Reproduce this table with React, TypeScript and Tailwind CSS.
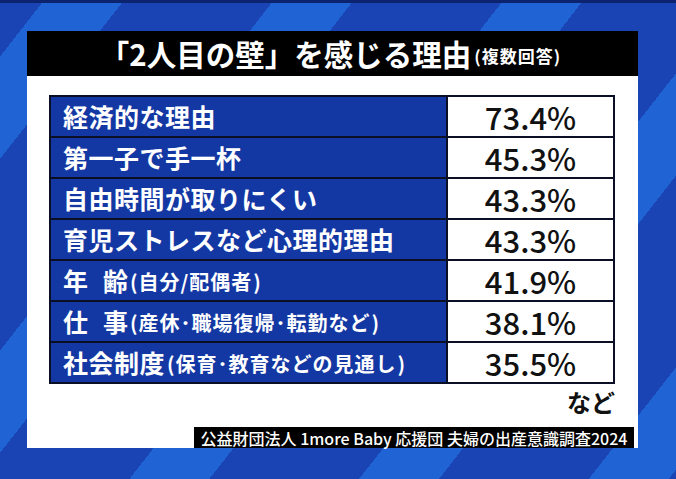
const rows: { label: string; sub?: string[]; spaced?: boolean; value: string }[] = [
  { label: '経済的な理由', value: '73.4%' },
  { label: '第一子で手一杯', value: '45.3%' },
  { label: '自由時間が取りにくい', value: '43.3%' },
  { label: '育児ストレスなど心理的理由', value: '43.3%' },
  { label: '年齢', sub: ['自分/配偶者'], spaced: true, value: '41.9%' },
  { label: '仕事', sub: ['産休', '職場復帰', '転勤など'], spaced: true, value: '38.1%' },
  { label: '社会制度', sub: ['保育', '教育などの見通し'], value: '35.5%' },
];

function Sub({ parts }: { parts: string[] }) {
  return (
    <span className="text-[20px] leading-none mt-[2px] tracking-[1px] flex items-center">
      <span className="ml-[2px]">(</span>
      {parts.map((p, i) => (
        <span key={p}>
          {i > 0 && <span>･</span>}
          {p}
        </span>
      ))}
      <span className="ml-[1px]">)</span>
    </span>
  );
}

export default function App() {
  return (
    <div
      className="w-[676px] h-[479px] overflow-hidden border-t-[3px] border-[#0c2470] pt-[28px] pl-[27px] bg-[repeating-linear-gradient(128deg,#1a43b4_0px,#1a43b4_33px,#2063d4_33px,#2063d4_96px,#1a43b4_96px,#1a43b4_181px)]"
      style={{ fontFamily: '"Noto Sans CJK JP", "Noto Sans", sans-serif' }}
    >
      <div className="w-[611px] flex flex-col">
        <div className="h-[45px] bg-black flex items-center justify-center text-white font-bold pr-[4px]">
          <span className="text-[29.5px] leading-none">「2人目の壁」を感じる理由</span>
          <span className="text-[17px] leading-none mt-[3px] tracking-[1px] ml-[3px]">(複数回答)</span>
        </div>
        <div className="h-[372px] bg-white flex flex-col pt-[19px] pl-[22px]">
          <div className="w-[566px] border-t-2 border-x-2 border-[#0b0f25]">
            {rows.map((r) => (
              <div key={r.value + r.label} className="h-[41px] flex border-b-2 border-[#0b0f25]">
                <div className="w-[395px] bg-[#1438a3] flex items-center pl-[12px] text-white font-bold">
                  {r.spaced ? (
                    <span className="text-[25px] leading-none flex">
                      <span>{r.label[0]}</span>
                      <span className="ml-[15px]">{r.label[1]}</span>
                    </span>
                  ) : (
                    <span className="text-[25px] leading-none tracking-[0.5px]">{r.label}</span>
                  )}
                  {r.sub && <Sub parts={r.sub} />}
                </div>
                <div className="flex-1 border-l-2 border-[#0b0f25] bg-white flex items-center justify-center">
                  <span className="text-[31px] leading-none font-medium text-[#111]">{r.value}</span>
                </div>
              </div>
            ))}
          </div>
          <div className="w-[566px] flex justify-end mt-[3px]">
            <span className="text-[24px] leading-none font-bold text-[#111] py-[3px]">など</span>
          </div>
          <div className="mt-auto self-end h-[21px] w-[440px] bg-black flex items-center justify-center text-white text-[16px] leading-none font-medium mr-[4px]">
            公益財団法人 1more Baby 応援団 夫婦の出産意識調査2024
          </div>
        </div>
      </div>
    </div>
  );
}
